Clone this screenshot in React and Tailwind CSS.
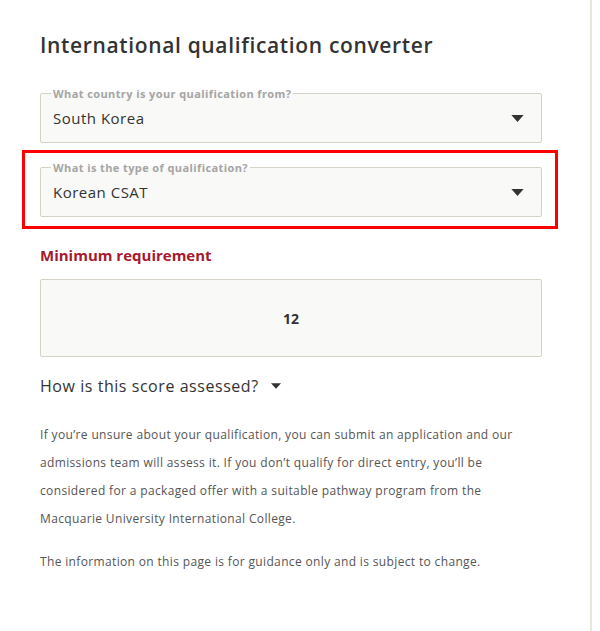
import React from "react";

const Caret = ({ className }) => (
  <svg viewBox="0 0 14 8" className={className} fill="currentColor">
    <path d="M0 0h14L7 8z" />
  </svg>
);

const SelectField = ({ label, value }) => (
  <div className="relative h-[50px] border border-[#d6d2c4] bg-[#f9f9f7] rounded-[2px] flex items-center justify-between pl-3 pr-[17px]">
    <span className="absolute -top-[7px] left-[10px] px-[2px] text-[11px] font-bold text-[#a5a5a5] leading-[13px] tracking-[0.4px] bg-[linear-gradient(to_bottom,#ffffff_50%,#f9f9f7_50%)]">
      {label}
    </span>
    <span className="text-[15px] text-[#333] leading-5 tracking-[0.5px]">{value}</span>
    <Caret className="w-[13px] h-[7px] text-[#333]" />
  </div>
);

export default function App() {
  return (
    <div className="min-h-screen bg-white font-['Open_Sans',sans-serif]">
      <div className="w-[592px] min-h-[631px] border-r-2 border-[#e8e5dc] pt-[33px] pl-10 pr-[48px]">
        <h1 className="text-[21px] font-semibold text-[#333] leading-6 tracking-[0.65px]">
          International qualification converter
        </h1>

        <div className="mt-[36px]">
          <SelectField label="What country is your qualification from?" value="South Korea" />
        </div>

        <div className="-ml-[18px] -mr-[16px] mt-[7px] border-[3px] border-[#ff0000] pl-[15px] pr-[13px] pt-[14px] pb-[9px]">
          <SelectField label="What is the type of qualification?" value="Korean CSAT" />
        </div>

        <h2 className="mt-[16px] text-[15px] font-bold text-[#a6192e] leading-5">
          Minimum requirement
        </h2>

        <div className="mt-[14px] h-[78px] border border-[#d6d2c4] bg-[#f9f9f7] rounded-[2px] flex items-center justify-center">
          <span className="text-[14px] font-bold text-[#333]">12</span>
        </div>

        <button className="mt-[19px] flex items-center gap-[12px] text-[16px] text-[#333] leading-5 tracking-[0.55px]">
          How is this score assessed?
          <Caret className="w-[10px] h-[6px] text-[#333]" />
        </button>

        <p className="mt-[25px] text-[12px] leading-[28px] text-[#555] tracking-[0.35px]">
          If you’re unsure about your qualification, you can submit an application and our
          <br />
          admissions team will assess it. If you don’t qualify for direct entry, you’ll be
          <br />
          considered for a packaged offer with a suitable pathway program from the
          <br />
          Macquarie University International College.
        </p>
        <p className="mt-[15px] text-[12px] leading-[28px] text-[#555] tracking-[0.35px]">
          The information on this page is for guidance only and is subject to change.
        </p>
      </div>
    </div>
  );
}
